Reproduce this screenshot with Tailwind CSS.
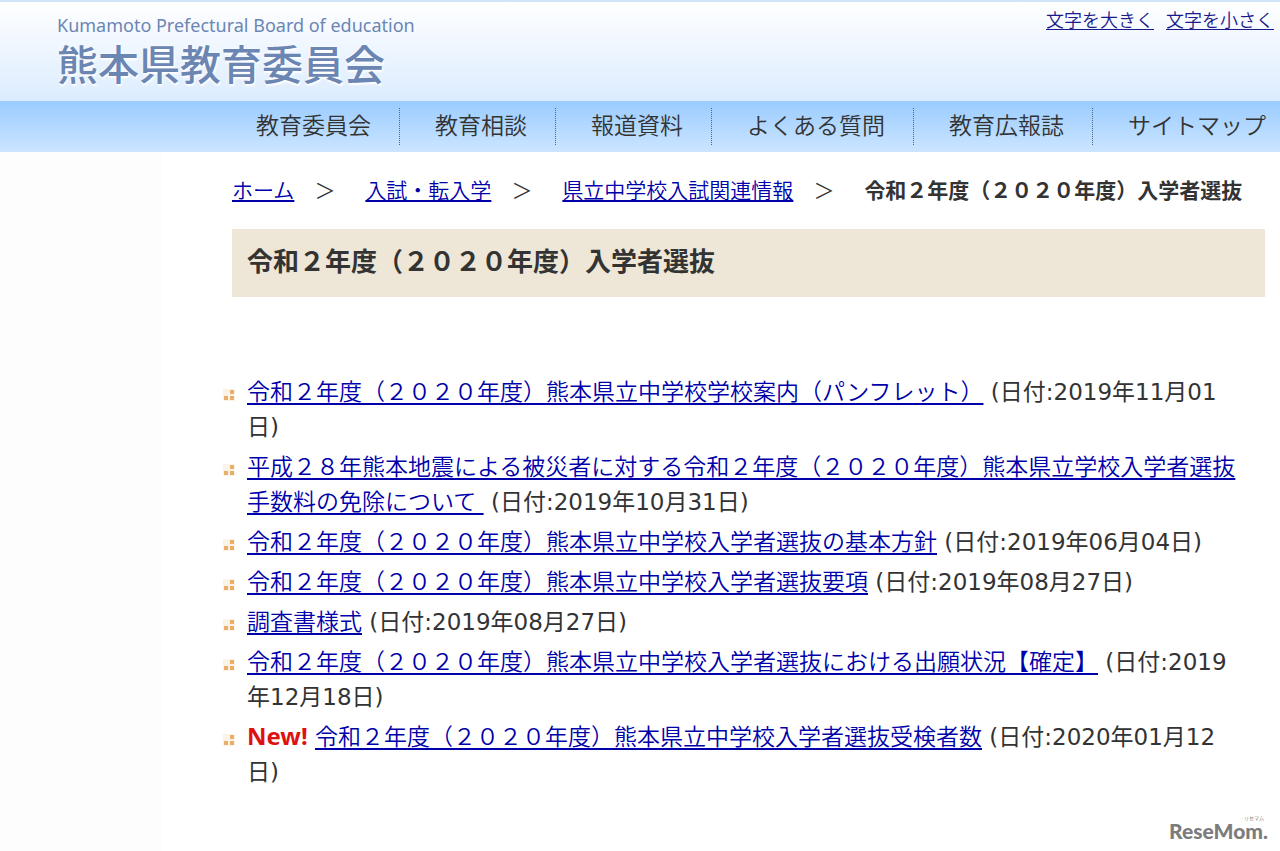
<!DOCTYPE html>
<html lang="ja">
<head>
    <meta charset="UTF-8">
    <meta name="viewport" content="width=device-width, initial-scale=1.0">
    <title>熊本県教育委員会</title>
    <script src="https://cdn.jsdelivr.net/npm/@tailwindcss/browser@4"></script>
</head>
<body class="relative flex min-h-screen flex-col bg-white font-['DejaVu_Sans','Noto_Sans_CJK_JP',sans-serif] text-[#333333]">
    <header class="flex h-[101px] items-start justify-between border-t-2 border-[#d3e5fa] bg-linear-to-b from-white to-[#dcecfe] pl-[57px] pr-[6px]">
        <a href="#" class="block pt-[13px] text-[#6b86b3]">
            <span class="block font-['Noto_Sans',sans-serif] text-[18px] leading-5">Kumamoto Prefectural Board of education</span>
            <span class="block font-['Noto_Sans_CJK_JP',sans-serif] text-[41px] font-medium leading-[54px] [text-shadow:0_0_3px_#fff,1px_2px_2px_#fff]">熊本県教育委員会</span>
        </a>
        <div class="flex gap-3 pt-1 font-['Noto_Sans_CJK_JP',sans-serif] text-[18px] font-[350] leading-[26px] text-[#1a1a8c]">
            <a href="#" class="underline underline-offset-2">文字を大きく</a>
            <a href="#" class="underline underline-offset-2">文字を小さく</a>
        </div>
    </header>

    <nav class="flex h-[51px] justify-end bg-linear-to-b from-[#99ccff] to-[#cce5ff] py-[7px] pr-[14px] font-['Noto_Sans_CJK_JP',sans-serif] text-[23px] font-[350] leading-[32px] whitespace-nowrap">
        <a href="#" class="border-r border-dotted border-[#4d6580] pr-7">教育委員会</a>
        <a href="#" class="border-r border-dotted border-[#4d6580] pl-[35px] pr-7">教育相談</a>
        <a href="#" class="border-r border-dotted border-[#4d6580] pl-[35px] pr-7">報道資料</a>
        <a href="#" class="border-r border-dotted border-[#4d6580] pl-[35px] pr-7">よくある質問</a>
        <a href="#" class="border-r border-dotted border-[#4d6580] pl-[35px] pr-7">教育広報誌</a>
        <a href="#" class="pl-[35px]">サイトマップ</a>
    </nav>

    <div class="grid grow grid-cols-[162px_1fr]">
        <div class="bg-[#fdfdfd]"></div>
        <main class="pl-[70px] pr-[15px]">
            <div class="flex pt-5 font-['Noto_Sans_CJK_JP',sans-serif] text-[21px] leading-[34px] whitespace-nowrap">
                <a href="#" class="font-[350] text-[#0000aa] underline underline-offset-2">ホーム</a>
                <span class="ml-5 mr-[30px] font-[350]">＞</span>
                <a href="#" class="font-[350] text-[#0000aa] underline underline-offset-2">入試・転入学</a>
                <span class="ml-5 mr-[30px] font-[350]">＞</span>
                <a href="#" class="font-[350] text-[#0000aa] underline underline-offset-2">県立中学校入試関連情報</a>
                <span class="ml-5 mr-[30px] font-[350]">＞</span>
                <span class="font-bold">令和２年度（２０２０年度）入学者選抜</span>
            </div>

            <h1 class="mt-[23px] h-[68px] bg-[#eee6d6] px-[15px] pt-3 text-[26px] font-bold leading-[42px]">令和２年度（２０２０年度）入学者選抜</h1>

            <ul class="mt-[78px] space-y-[5px] pl-[15px] pr-[25px] text-[23px] leading-[35px]">
                <li class="relative">
                    <svg class="absolute -left-6 top-[14px] size-3" viewBox="0 0 12 12"><path fill="#fbf3e8" d="M0 0h12v12H0z"/><path fill="#e9ae68" d="M7 1h4v4H7zM1 7h4v4H1zM7 7h4v4H7z"/></svg>
                    <a href="#" class="font-[350] text-[#0000aa] underline underline-offset-3">令和２年度（２０２０年度）熊本県立中学校学校案内（パンフレット）</a> (日付:2019年11月01日)
                </li>
                <li class="relative">
                    <svg class="absolute -left-6 top-[14px] size-3" viewBox="0 0 12 12"><path fill="#fbf3e8" d="M0 0h12v12H0z"/><path fill="#e9ae68" d="M7 1h4v4H7zM1 7h4v4H1zM7 7h4v4H7z"/></svg>
                    <a href="#" class="font-[350] text-[#0000aa] underline underline-offset-3">平成２８年熊本地震による被災者に対する令和２年度（２０２０年度）熊本県立学校入学者選抜手数料の免除について&nbsp;</a> (日付:2019年10月31日)
                </li>
                <li class="relative">
                    <svg class="absolute -left-6 top-[14px] size-3" viewBox="0 0 12 12"><path fill="#fbf3e8" d="M0 0h12v12H0z"/><path fill="#e9ae68" d="M7 1h4v4H7zM1 7h4v4H1zM7 7h4v4H7z"/></svg>
                    <a href="#" class="font-[350] text-[#0000aa] underline underline-offset-3">令和２年度（２０２０年度）熊本県立中学校入学者選抜の基本方針</a> (日付:2019年06月04日)
                </li>
                <li class="relative">
                    <svg class="absolute -left-6 top-[14px] size-3" viewBox="0 0 12 12"><path fill="#fbf3e8" d="M0 0h12v12H0z"/><path fill="#e9ae68" d="M7 1h4v4H7zM1 7h4v4H1zM7 7h4v4H7z"/></svg>
                    <a href="#" class="font-[350] text-[#0000aa] underline underline-offset-3">令和２年度（２０２０年度）熊本県立中学校入学者選抜要項</a> (日付:2019年08月27日)
                </li>
                <li class="relative">
                    <svg class="absolute -left-6 top-[14px] size-3" viewBox="0 0 12 12"><path fill="#fbf3e8" d="M0 0h12v12H0z"/><path fill="#e9ae68" d="M7 1h4v4H7zM1 7h4v4H1zM7 7h4v4H7z"/></svg>
                    <a href="#" class="font-[350] text-[#0000aa] underline underline-offset-3">調査書様式</a> (日付:2019年08月27日)
                </li>
                <li class="relative">
                    <svg class="absolute -left-6 top-[14px] size-3" viewBox="0 0 12 12"><path fill="#fbf3e8" d="M0 0h12v12H0z"/><path fill="#e9ae68" d="M7 1h4v4H7zM1 7h4v4H1zM7 7h4v4H7z"/></svg>
                    <a href="#" class="font-[350] text-[#0000aa] underline underline-offset-3">令和２年度（２０２０年度）熊本県立中学校入学者選抜における出願状況【確定】</a> (日付:2019年12月18日)
                </li>
                <li class="relative">
                    <svg class="absolute -left-6 top-[14px] size-3" viewBox="0 0 12 12"><path fill="#fbf3e8" d="M0 0h12v12H0z"/><path fill="#e9ae68" d="M7 1h4v4H7zM1 7h4v4H1zM7 7h4v4H7z"/></svg>
                    <strong class="font-['Noto_Sans',sans-serif] text-[24px] font-bold leading-6 text-[#dd1111]">New!</strong>
                    <a href="#" class="font-[350] text-[#0000aa] underline underline-offset-3">令和２年度（２０２０年度）熊本県立中学校入学者選抜受検者数</a> (日付:2020年01月12日)
                </li>
            </ul>
        </main>
    </div>

    <div class="absolute bottom-[10px] right-3 text-[#7c7c7c]">
        <span class="block pr-1 text-right text-[5px] leading-[6px]">リセマム</span>
        <span class="block font-['Lato',sans-serif] text-[21px] font-black leading-5">ReseMom.</span>
    </div>
</body>
</html>
